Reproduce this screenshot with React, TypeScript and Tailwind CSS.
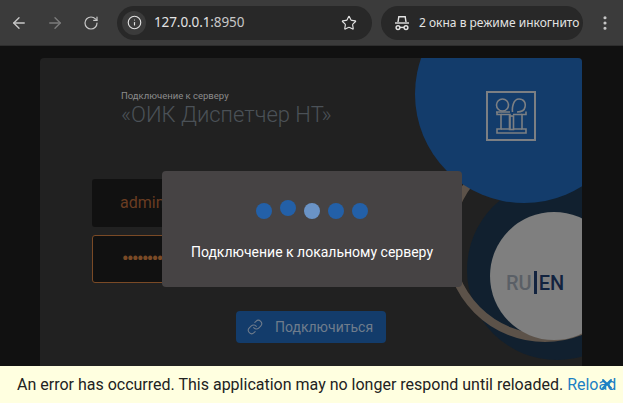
import { ArrowLeft, ArrowRight, EllipsisVertical, Info, Link, RotateCw, Star, X } from 'lucide-react';

const DOTS = [
  { id: 1, cls: 'bg-[#2360a8]' },
  { id: 2, cls: 'bg-[#2360a8] -translate-y-[3px]' },
  { id: 3, cls: 'bg-[#6a93c6]' },
  { id: 4, cls: 'bg-[#2360a8]' },
  { id: 5, cls: 'bg-[#2360a8]' },
];

function Incognito() {
  return (
    <svg width="16" height="16" viewBox="0 0 16 16" fill="none" stroke="#e3e3e3" strokeWidth="1.4">
      <path d="M4 7 L4.8 1.8 H11.2 L12 7" />
      <path d="M1 8 H15" />
      <circle cx="4" cy="12.6" r="1.9" />
      <circle cx="12" cy="12.6" r="1.9" />
      <path d="M6 12.4 H10" />
    </svg>
  );
}

function Logo() {
  return (
    <svg width="50" height="50" viewBox="0 0 50 50" fill="none" stroke="#7c7f83" strokeWidth="1.6" className="block">
      <rect x="1" y="1" width="48" height="48" strokeWidth="2" />
      <circle cx="16.5" cy="14" r="6" />
      <path d="M10 21 H24 M26.5 21 C26 17 27 8 33 8 C38 8 40 12 39 16 C38.5 19 36 21 31 21" />
      <path d="M11 21 V23.5 H15 V38 H11 V42 H40 V38 H36 V23.5 H40 V20.5" />
      <path d="M15 23.5 H24 V38 H15 M27 23.5 H36 M27 38 H36" />
      <rect x="23.5" y="25" width="4" height="13.5" />
    </svg>
  );
}

export default function App() {
  return (
    <div className="relative flex h-[403px] w-[623px] flex-col overflow-hidden bg-[#111111] font-['Roboto',sans-serif]">
      <header className="flex h-[46px] shrink-0 items-center border-b border-[#2e2e2e] bg-[#3b3b3b] font-['Noto_Sans',sans-serif] text-[#e3e3e3]">
        <div className="flex w-[117px] items-center pl-[10px]">
          <ArrowLeft size={18} strokeWidth={1.8} className="text-[#c7c7c7]" />
          <ArrowRight size={18} strokeWidth={1.8} className="ml-[18px] text-[#7c7c7c]" />
          <RotateCw size={16} strokeWidth={1.8} className="ml-[19px] text-[#c7c7c7]" />
        </div>
        <div className="flex h-[34px] w-[255px] items-center rounded-full bg-[#282828] pl-[5px] pr-[15px]">
          <span className="flex h-6 w-6 items-center justify-center rounded-full bg-[#3b3b3b]">
            <Info size={15} strokeWidth={1.8} />
          </span>
          <span className="ml-[8px] flex-1 text-[13.5px] tracking-[-0.1px]">
            127.0.0.1<span className="text-[#c7c7c7]">:8950</span>
          </span>
          <Star size={16} strokeWidth={1.7} />
        </div>
        <div className="ml-[9px] flex h-[34px] w-[202px] items-center rounded-full bg-[#282828] pl-[13px]">
          <Incognito />
          <span className="ml-[9px] whitespace-nowrap text-[12px]">2 окна в режиме инкогнито</span>
        </div>
        <EllipsisVertical size={18} strokeWidth={2.2} className="ml-[13px] text-[#c7c7c7]" />
      </header>

      <main className="min-h-0 flex-1 px-[40px] pt-[12px]">
        <section className="relative h-[340px] w-[542px] overflow-hidden rounded-t-[4px] bg-[#212121] pl-[81px] pt-[32px]">
          {/* decorative circles */}
          <div className="absolute left-[427px] top-[122px] h-[180px] w-[180px] rounded-full bg-[#11202f]" />
          <div className="absolute left-[405px] top-[84px] h-[200px] w-[200px] rounded-full border-[8px] border-[#5c5249]" />
          <div className="absolute left-[375px] top-[-73px] h-[218px] w-[218px] rounded-full bg-[#133c6b]" />
          <div className="absolute left-[450px] top-[154px] flex h-[128px] w-[128px] items-center rounded-full bg-[#7f7f7f] pl-[16px] pt-[13px] text-[20px] font-medium text-[#5a5f66]">
            RU<span className="mx-[2px] h-[23px] w-[3px] bg-[#12233f]" /><span className="text-[#12233f]">EN</span>
          </div>
          <div className="absolute left-[446px] top-[33px]">
            <Logo />
          </div>

          <div className="relative">
            <p className="text-[9.5px] leading-[12px] text-[#8c8c8c]">Подключение к серверу</p>
            <h1 className="text-[22px] font-light leading-[26px] text-[#4b5157]">«ОИК Диспетчер НТ»</h1>
          </div>

          <div className="relative -ml-[29px] mt-[51px] flex w-[320px] flex-col gap-[8px]">
            <div className="flex h-[48px] items-center rounded-[3px] bg-[#111111] pl-[28px] text-[16px] text-[#6a3d22]">admin</div>
            <div className="flex h-[48px] items-center rounded-[3px] border border-[#7a4a26] bg-[#111111] pl-[29px]">
              <span className="text-[18px] font-bold leading-none tracking-[-1.5px] text-[#7a4a26]">••••••••••••</span>
            </div>
          </div>

          <div className="relative -ml-[81px] mt-[28px] flex justify-center">
            <button className="flex h-[32px] w-[150px] items-center rounded-[4px] bg-[#133c6b] pl-[11px] text-[14px] text-[#6f7c8c]">
              <Link size={16} strokeWidth={1.6} />
              <span className="ml-[12px]">Подключиться</span>
            </button>
          </div>
        </section>
      </main>

      <footer className="relative flex h-[37px] shrink-0 items-center whitespace-nowrap bg-[#ffffe0] pl-[17px] text-[16px] text-[#222222]">
        An error has occurred. This application may no longer respond until reloaded.
        <span className="ml-[4px] text-[#1b80c4]">Reload</span>
        <X size={16} strokeWidth={3} className="absolute left-[599px] top-[10px] text-[#1b80c4]" />
      </footer>

      {/* loading dialog */}
      <div className="absolute left-[162px] top-[171px] flex h-[116px] w-[300px] flex-col items-center rounded-[4px] bg-[#464344] pt-[32px] text-white">
        <div className="flex gap-[8px]">
          {DOTS.map((d) => (
            <span key={d.id} className={`h-4 w-4 rounded-full ${d.cls}`} />
          ))}
        </div>
        <p className="mt-[24px] text-[14px] leading-[18px]">Подключение к локальному серверу</p>
      </div>
    </div>
  );
}
